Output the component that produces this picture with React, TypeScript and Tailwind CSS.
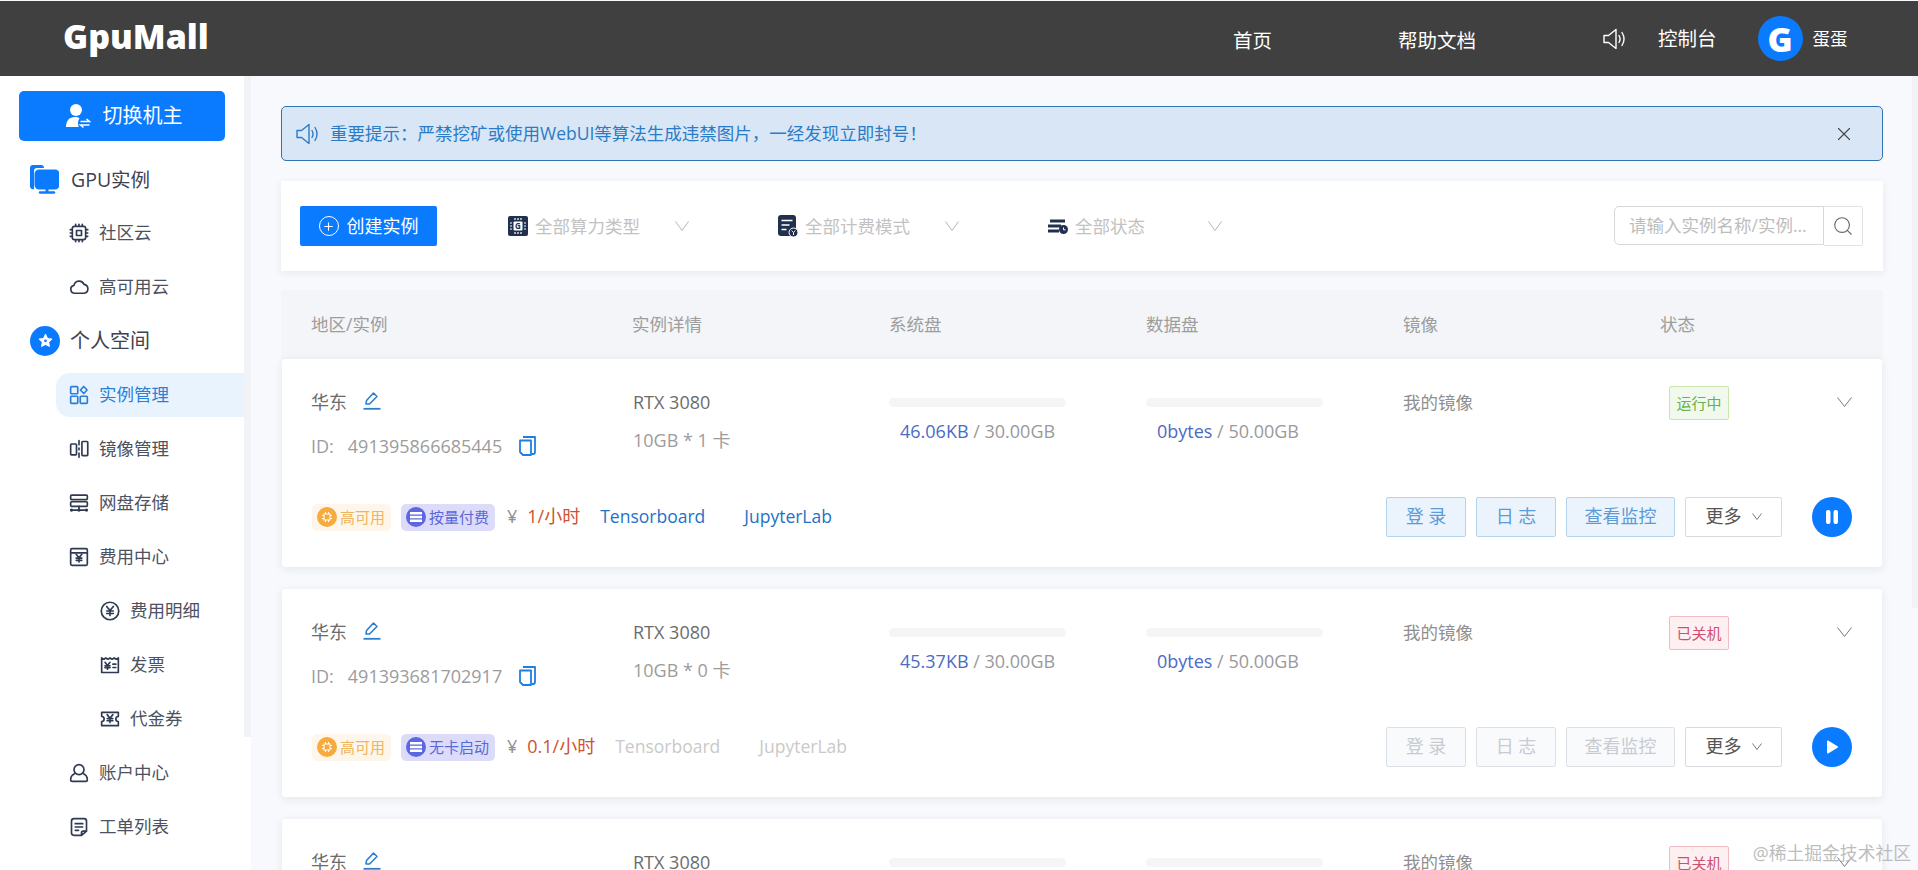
import type { ReactNode } from "react";
import { Search, X, Plus } from "lucide-react";

const ink = "#2f3a52";

function Icon({ size = 20, color = ink, children }: { size?: number; color?: string; children: ReactNode }) {
  return (
    <svg width={size} height={size} viewBox="0 0 24 24" fill="none" stroke={color} strokeWidth={2} strokeLinecap="round" strokeLinejoin="round" className="shrink-0">
      {children}
    </svg>
  );
}

function Vee({ w, h, color, className }: { w: number; h: number; color: string; className?: string }) {
  return (
    <svg width={w} height={h} viewBox={`0 0 ${w} ${h}`} fill="none" stroke={color} strokeWidth={1} className={`shrink-0 ${className ?? ""}`}>
      <path d={`M0.500 0.500L${w / 2} ${h - 0.5}L${w - 0.5} 0.500`} />
    </svg>
  );
}

const Yen = ({ x = 12, y = 12, s = 1 }: { x?: number; y?: number; s?: number }) => (
  <path d={`M${x - 4 * s} ${y - 5 * s}L${x} ${y}L${x + 4 * s} ${y - 5 * s}M${x} ${y}V${y + 6 * s}M${x - 4 * s} ${y + 0.5 * s}H${x + 4 * s}M${x - 4 * s} ${y + 3.5 * s}H${x + 4 * s}`} />
);

const ChipIcon = () => (
  <Icon>
    <rect x="4" y="4" width="16" height="16" rx="2.5" />
    <rect x="9" y="9" width="6" height="6" />
    <path d="M8 1.500v2M12 1.500v2M16 1.500v2M8 20.500v2M12 20.500v2M16 20.500v2M1.500 8h2M1.500 12h2M1.500 16h2M20.500 8h2M20.500 12h2M20.500 16h2" />
  </Icon>
);
const CloudIcon = () => (
  <Icon>
    <path d="M7 19.500a4.800 4.800 0 0 1-1-9.500 6.300 6.300 0 0 1 12-1.200 5.400 5.400 0 0 1 0 10.700z" />
  </Icon>
);
const GridIcon = () => (
  <Icon color="#2b7fd8">
    <rect x="2" y="2" width="8.500" height="8.500" rx="1" />
    <rect x="2" y="13.500" width="8.500" height="8.500" rx="1" />
    <rect x="13.500" y="13.500" width="8.500" height="8.500" rx="1" />
    <path d="M17.700 1.800l4 4.200-4 4.200-4-4.200z" />
  </Icon>
);
const MirrorIcon = () => (
  <Icon>
    <rect x="2" y="6" width="7" height="13" rx="1" />
    <rect x="15.500" y="3" width="7" height="17" rx="1" />
    <path d="M12 2v5M12 11v2M12 17v5" />
  </Icon>
);
const DiskIcon = () => (
  <Icon>
    <rect x="2" y="2.500" width="20" height="5.500" rx="1" />
    <rect x="2" y="10.500" width="20" height="5.500" rx="1" />
    <path d="M12 16v4M4 20.500h16" />
    <circle cx="3" cy="20.500" r="1" />
    <circle cx="12" cy="20.500" r="1" />
    <circle cx="21" cy="20.500" r="1" />
  </Icon>
);
const FeeIcon = () => (
  <Icon>
    <rect x="2" y="2" width="20" height="20" rx="1.500" />
    <path d="M2 7h20" />
    <Yen x={12} y={13} s={0.85} />
  </Icon>
);
const CoinIcon = () => (
  <Icon>
    <circle cx="12" cy="12" r="10.500" />
    <Yen x={12} y={11.5} />
  </Icon>
);
const InvoiceIcon = () => (
  <Icon>
    <path d="M2 3.500l2.500 1.500L7 3.500l2.500 1.500L12 3.500l2.500 1.500L17 3.500l2.500 1.500L22 3.500V21H2z" />
    <Yen x={9} y={12.5} s={0.75} />
    <path d="M15.500 11H19M15.500 15H19" />
  </Icon>
);
const VoucherIcon = () => (
  <Icon>
    <path d="M2 4h20v5a3 3 0 0 0 0 6v5H2v-5a3 3 0 0 0 0-6z" />
    <Yen x={12} y={11} s={0.85} />
  </Icon>
);
const UserIcon = () => (
  <Icon>
    <circle cx="12" cy="8" r="6" />
    <path d="M6.500 13C3.500 14.500 2 17 2 20c0 1 .7 2 2 2h16c1.300 0 2-1 2-2 0-3-1.500-5.500-4.500-7" />
  </Icon>
);
const TicketIcon = () => (
  <Icon>
    <path d="M15 22H6a3 3 0 0 1-3-3V5a3 3 0 0 1 3-3h12a3 3 0 0 1 3 3v12zM15 22v-3a2 2 0 0 1 2-2h4" />
    <path d="M7.500 8h9M7.500 12h9M7.500 16h4" />
  </Icon>
);

const Speaker = ({ color, size = 24 }: { color: string; size?: number }) => (
  <svg width={size} height={size} viewBox="0 0 24 24" fill="none" stroke={color} strokeWidth={1.4} strokeLinejoin="round" strokeLinecap="round" className="shrink-0">
    <path d="M2 8.500h4.500L14 2.500v19l-7.500-6H2z" />
    <path d="M17 8.500c1.200 2 1.200 5 0 7M20 5.500c2.500 4 2.500 9 0 13" />
  </svg>
);

function SideRow({ icon, label, indent = 69, active = false }: { icon: ReactNode; label: string; indent?: number; active?: boolean }) {
  return (
    <div className="h-[54px] flex items-center relative">
      {active && <div className="absolute left-[56px] right-0 top-[5px] h-[44px] bg-[#e9f3fe] rounded-l-[14px]" />}
      <div className={`relative flex items-center gap-[10px] text-[17.5px] ${active ? "text-[#2b7fd8]" : "text-[#4c5260]"}`} style={{ marginLeft: indent }}>
        {icon}
        <span>{label}</span>
      </div>
    </div>
  );
}

function Sidebar() {
  return (
    <aside className="w-[244px] shrink-0 bg-white">
      <button className="ml-[19px] mt-[15px] w-[206px] h-[50px] rounded-[5px] bg-[#0a7bff] text-white text-[20px] flex items-center justify-center gap-[12px] pl-[3px]">
        <svg width="26" height="26" viewBox="0 0 26 26" fill="#fff" className="shrink-0">
          <circle cx="11" cy="7" r="6" />
          <path d="M1 24c0-6 3-10 9-10 2 0 3.500.5 4.500 1.300-1 1.500-1.500 3.500-1.500 5.200 0 1.300.3 2.500.8 3.500z" />
          <path d="M15.500 18.500h9l-3-2.500M24.500 22h-9l3 2.500" stroke="#fff" strokeWidth="1.500" fill="none" />
        </svg>
        切换机主
      </button>
      <div className="mt-[12px]">
        <div className="h-[52.5px] flex items-center gap-[12px] ml-[30px] text-[19.5px] text-[#3c4250]">
          <svg width="29" height="29" viewBox="0 0 29 29" fill="none" className="shrink-0">
            <path d="M3 0h8a3 3 0 0 1 3 3H7a3 3 0 0 0-3 3v18a3 3 0 0 1-4-2V3a3 3 0 0 1 3-3z" fill="#0a7bff" />
            <rect x="6" y="6" width="22" height="17" rx="3" stroke="#0a7bff" strokeWidth="3" fill="#0a7bff" />
            <path d="M10 27.500h14" stroke="#0a7bff" strokeWidth="2.500" strokeLinecap="round" />
            <path d="M17 23v4" stroke="#0a7bff" strokeWidth="3" />
          </svg>
          <span>GPU实例</span>
        </div>
        <SideRow icon={<ChipIcon />} label="社区云" />
        <SideRow icon={<CloudIcon />} label="高可用云" />
        <div className="h-[54px] flex items-center gap-[10px] ml-[30px] text-[20px] text-[#3c4250]">
          <span className="w-[30px] h-[30px] rounded-full bg-[#0a7bff] flex items-center justify-center">
            <svg width="15" height="15" viewBox="0 0 24 24" fill="#fff" stroke="#fff" strokeWidth="2" strokeLinejoin="round">
              <path d="M12 2.500l3 6.300 6.800.9-5 4.700 1.300 6.800-6.100-3.300-6.100 3.300 1.300-6.800-5-4.700 6.800-.9z" />
              <circle cx="12" cy="12.500" r="2.200" fill="#0a7bff" stroke="none" />
            </svg>
          </span>
          <span>个人空间</span>
        </div>
        <SideRow icon={<GridIcon />} label="实例管理" active />
        <SideRow icon={<MirrorIcon />} label="镜像管理" />
        <SideRow icon={<DiskIcon />} label="网盘存储" />
        <SideRow icon={<FeeIcon />} label="费用中心" />
        <SideRow icon={<CoinIcon />} label="费用明细" indent={100} />
        <SideRow icon={<InvoiceIcon />} label="发票" indent={100} />
        <SideRow icon={<VoucherIcon />} label="代金券" indent={100} />
        <SideRow icon={<UserIcon />} label="账户中心" />
        <SideRow icon={<TicketIcon />} label="工单列表" />
      </div>
    </aside>
  );
}

function Toolbar() {
  const selects = [
    { label: "全部算力类型", width: "w-[270px]", chevron: "ml-[28px]", icon: (
      <svg width="20" height="20" viewBox="0 0 20 20" className="shrink-0">
        <rect width="20" height="20" rx="2" fill="#22304f" />
        <rect x="5.500" y="5.500" width="9" height="9" rx="1" fill="#fff" />
        <text x="10" y="13" textAnchor="middle" fontSize="8" fontWeight="700" fill="#22304f">G</text>
        <path d="M7 2v2M10 2v2M13 2v2M7 16v2M10 16v2M13 16v2M2 7h2M2 10h2M2 13h2M16 7h2M16 10h2M16 13h2" stroke="#fff" strokeWidth="1.200" />
      </svg>
    ) },
    { label: "全部计费模式", width: "w-[270px]", chevron: "ml-[28px]", icon: (
      <svg width="20" height="24" viewBox="0 0 20 24" className="shrink-0">
        <rect y="1" width="18" height="21" rx="3" fill="#22304f" />
        <path d="M3.500 6.500h11M3.500 11h8M3.500 15.500h5" stroke="#fff" strokeWidth="1.500" />
        <circle cx="15.500" cy="18.500" r="4.500" fill="#22304f" stroke="#fff" />
        <path d="M13.800 16.500l1.700 2 1.700-2M15.500 18.500v2.500" stroke="#fff" />
      </svg>
    ) },
    { label: "全部状态", width: "w-[174px]", chevron: "ml-auto", icon: (
      <svg width="20" height="16" viewBox="0 0 20 16" className="shrink-0">
        <path d="M2 1.500h15v3H2zM0 6.500h13v3H0zM0 11.500h11v3H0z" fill="#22304f" />
        <circle cx="15.500" cy="11.500" r="4.500" fill="#22304f" />
        <path d="M15.500 9.500v2.300h2" stroke="#fff" fill="none" />
      </svg>
    ) },
  ];
  return (
    <div className="mt-[20px] h-[90px] bg-white shadow-[0_2px_8px_rgba(40,60,90,0.08)] flex items-center pl-[19px] pr-[20px]">
      <button className="w-[137px] h-[40px] bg-[#0a7bff] rounded-[2px] text-white text-[18px] flex items-center justify-center gap-[8px]">
        <span className="w-[20px] h-[20px] rounded-full border-[1.5px] border-white flex items-center justify-center">
          <Plus size={13} strokeWidth={2} />
        </span>
        创建实例
      </button>
      <div className="ml-[71px] flex items-center">
        {selects.map((s) => (
          <div key={s.label} className={`${s.width} flex items-center gap-[7px] text-[17.5px] text-[#c2c2c2]`}>
            {s.icon}
            <span>{s.label}</span>
            <Vee w={14} h={10} color="#b5b5b5" className={s.chevron} />
          </div>
        ))}
      </div>
      <div className="ml-auto flex items-stretch h-[40px]">
        <div className="w-[210px] h-[39px] border border-[#d5d7dc] rounded-l-[5px] pl-[14px] flex items-center text-[17.5px] text-[#bdbdbd] whitespace-nowrap">
          请输入实例名称/实例...
        </div>
        <div className="w-[39px] border border-l-0 border-[#e0e2e6] rounded-r-[2px] flex items-center justify-center">
          <Search size={22} strokeWidth={1.200} color="#666" />
        </div>
      </div>
    </div>
  );
}

const columnGrid = "grid grid-cols-[321px_257px_257px_257px_257px_1fr]";

function Disk({ used, total }: { used: string; total: string }) {
  return (
    <div className="w-[177px]">
      <div className="mt-[9px] h-[9px] rounded-full bg-[#f5f5f6]" />
      <div className="mt-[10px] h-[28px] leading-[28px] pl-[11px] text-[18px] whitespace-nowrap text-[#9a9a9a]">
        <span className="text-[#4c6bc4]">{used}</span> / {total}
      </div>
    </div>
  );
}

function CardTag({ width, bg, color, circle, glyph, label }: { width: string; bg: string; color: string; circle: string; glyph: ReactNode; label: string }) {
  return (
    <div className={`${width} h-[27px] ${bg} rounded-[5px] flex items-center pl-[5px] gap-[3px]`}>
      <span className={`w-[20px] h-[20px] rounded-full ${circle} flex items-center justify-center`}>{glyph}</span>
      <span className={`text-[15px] ${color}`}>{label}</span>
    </div>
  );
}

type Inst = {
  id: string;
  card: string;
  tag: string;
  price: string;
  running: boolean;
  used: string;
};

const instances: Inst[] = [
  { id: "491395866685445", card: "10GB * 1 卡", tag: "按量付费", price: "1/小时", running: true, used: "46.06KB" },
  { id: "491393681702917", card: "10GB * 0 卡", tag: "无卡启动", price: "0.1/小时", running: false, used: "45.37KB" },
  { id: "491393681702917", card: "10GB * 0 卡", tag: "无卡启动", price: "0.1/小时", running: false, used: "45.37KB" },
];

function Card({ d }: { d: Inst }) {
  const actionClass = d.running
    ? "bg-[#ebf4fd] border-[#b4d3ec] text-[#5c9ad8]"
    : "bg-[#f9fafc] border-[#dcdfe6] text-[#c8cbd1]";
  const linkClass = d.running ? "text-[#2272c8]" : "text-[#c9c9c9]";
  return (
    <div className="w-[1600px] h-[208px] shrink-0 rounded-[4px] bg-white shadow-[0_2px_8px_rgba(40,60,90,0.10)]">
      <div className={`h-[138px] pt-[30px] pl-[29px] ${columnGrid}`}>
        <div>
          <div className="-mt-[1px] h-[28px] flex items-center text-[18px] text-[#6c6c6c]">
            华东
            <svg width="18" height="19" viewBox="0 0 18 19" fill="none" stroke="#2b7fd0" strokeWidth="1.600" strokeLinejoin="round" className="ml-[16px] -mt-[4px]">
              <path d="M3 13l.5-3.500L10.500 2l3.500 3.500L6.500 13z" />
              <path d="M0.500 17.800h17" strokeWidth="1.800" />
            </svg>
          </div>
          <div className="mt-[16px] h-[28px] flex items-center text-[18px] text-[#9c9c9c]">
            ID:
            <span className="ml-[14px]">{d.id}</span>
            <svg width="17" height="20" viewBox="0 0 17 20" fill="none" stroke="#1f7fe0" strokeWidth="1.800" strokeLinejoin="round" className="ml-[17px]">
              <path d="M4 1h12v15a2 2 0 0 1-2 2h-1" />
              <path d="M1 4.500h11V19H4l-3-3z" />
            </svg>
          </div>
        </div>
        <div className="pl-[1px]">
          <div className="-mt-[1px] h-[28px] leading-[28px] text-[18px] text-[#6c6c6c]">RTX 3080</div>
          <div className="mt-[10px] h-[28px] leading-[28px] text-[18px] text-[#9c9c9c]">{d.card}</div>
        </div>
        <Disk used={d.used} total="30.00GB" />
        <Disk used="0bytes" total="50.00GB" />
        <div className="-mt-[1px] h-[28px] leading-[28px] text-[17.5px] text-[#8f8f8f]">我的镜像</div>
        <div className="flex items-start justify-between pr-[30px] pl-[9px]">
          <div className={`-mt-[3px] w-[60px] h-[34px] rounded-[2px] border text-[15px] flex items-center justify-center ${d.running ? "bg-[#f0f9eb] border-[#c7e5ad] text-[#6ab04c]" : "bg-[#fef0f0] border-[#f0bcc4] text-[#cf4f70]"}`}>
            {d.running ? "运行中" : "已关机"}
          </div>
          <Vee w={15} h={10} color="#777" className="mt-[8px]" />
        </div>
      </div>
      <div className="h-[40px] pl-[30px] pr-[30px] flex items-center">
        <CardTag width="w-[79px]" bg="bg-[#fff6eb]" color="text-[#f0b45c]" circle="bg-[#f7ab3c]" label="高可用" glyph={
          <svg width="12" height="12" viewBox="0 0 12 12" fill="none" stroke="#fff"><rect x="3" y="3" width="6" height="6" /><path d="M4.500 1v2M7.500 1v2M4.500 9v2M7.500 9v2M1 4.500h2M1 7.500h2M9 4.500h2M9 7.500h2" /></svg>
        } />
        <div className="ml-[10px]">
          <CardTag width="w-[94px]" bg="bg-[#dcdcfa]" color="text-[#5a68d8]" circle="bg-[#5c67e0]" label={d.tag} glyph={
            <svg width="12" height="12" viewBox="0 0 12 12" fill="#fff"><rect y="1" width="12" height="2.500" /><rect y="4.800" width="12" height="2.500" /><rect y="8.500" width="12" height="2.500" /></svg>
          } />
        </div>
        <span className="ml-[12px] pb-[2px] text-[18px] text-[#8f8f8f]">¥</span>
        <span className="ml-[10px] pb-[2px] text-[18px] text-[#cf5230]">{d.price}</span>
        <span className={`ml-[20px] pb-[2px] text-[17.5px] ${linkClass}`}>Tensorboard</span>
        <span className={`ml-[39px] pb-[2px] text-[17.5px] ${linkClass}`}>JupyterLab</span>
        <div className="ml-auto flex items-center">
          <button className={`w-[80px] h-[40px] pb-[2px] rounded-[2px] border text-[18px] ${actionClass}`}>登 录</button>
          <button className={`ml-[10px] w-[80px] h-[40px] pb-[2px] rounded-[2px] border text-[18px] ${actionClass}`}>日 志</button>
          <button className={`ml-[10px] w-[109px] h-[40px] pb-[2px] rounded-[2px] border text-[18px] ${actionClass}`}>查看监控</button>
          <button className="ml-[10px] w-[97px] h-[40px] pb-[2px] rounded-[2px] border border-[#d8dade] bg-white text-[18px] text-[#555] flex items-center justify-center gap-[10px]">
            更多
            <Vee w={10} h={7} color="#777" />
          </button>
          <span className="ml-[30px] w-[40px] h-[40px] rounded-full bg-[#0a7bff] flex items-center justify-center">
            {d.running ? (
              <svg width="16" height="16" viewBox="0 0 16 16" fill="#fff"><rect x="2" y="1" width="4.500" height="14" rx="2" /><rect x="9.500" y="1" width="4.500" height="14" rx="2" /></svg>
            ) : (
              <svg width="16" height="16" viewBox="0 0 16 16" fill="#fff" stroke="#fff" strokeWidth="2" strokeLinejoin="round"><path d="M4 2.500l9 5.500-9 5.500z" /></svg>
            )}
          </span>
        </div>
      </div>
    </div>
  );
}

export default function App() {
  return (
    <div className="w-[1918px] h-[870px] overflow-hidden relative bg-[#f7f9fc] font-['Open_Sans','Noto_Sans_CJK_SC',sans-serif] flex flex-col">
      <header className="mt-[1px] h-[75px] shrink-0 bg-[#404040] text-white flex items-center">
        <span className="ml-[63px] w-[145px] text-[34px] font-extrabold -mt-[4px] whitespace-nowrap">GpuMall</span>
        <span className="ml-[1025px] text-[19.5px] w-[40px] whitespace-nowrap mt-[4px]">首页</span>
        <span className="ml-[125px] text-[19.5px] w-[80px] whitespace-nowrap mt-[4px]">帮助文档</span>
        <span className="ml-[124px]"><Speaker color="#fff" /></span>
        <span className="ml-[32px] text-[19.5px] whitespace-nowrap">控制台</span>
        <span className="ml-[41px] w-[45px] h-[45px] rounded-full bg-[#0a7bff] flex items-center justify-center text-[34px] font-extrabold leading-none">G</span>
        <span className="ml-[10px] text-[17.5px]">蛋蛋</span>
      </header>
      <div className="flex flex-1 min-h-0">
        <Sidebar />
        <div className="w-[7px] shrink-0 bg-white">
          <div className="h-[661px] bg-[#f1f3f6]" />
        </div>
        <main className="w-[1632px] shrink-0 pl-[30px] pt-[30px]">
          <div className="w-[1602px]">
            <div className="h-[55px] rounded-[5px] border border-[#2f74b5] bg-[#d9e6f6] flex items-center pl-[13px] pr-[27px] text-[17.5px] text-[#2a7cc7]">
              <Speaker color="#2a7cc7" />
              <span className="ml-[11px]">重要提示：严禁挖矿或使用WebUI等算法生成违禁图片，一经发现立即封号！</span>
              <X size={22} strokeWidth={1.200} color="#444" className="ml-auto" />
            </div>
            <Toolbar />
            <div className={`mt-[19px] h-[69px] bg-[#f3f5f8] pl-[30px] items-center text-[17.5px] text-[#9d9d9d] ${columnGrid}`}>
              <span>地区/实例</span>
              <span>实例详情</span>
              <span>系统盘</span>
              <span>数据盘</span>
              <span>镜像</span>
              <span>状态</span>
            </div>
            <div className="flex flex-col gap-[22px] pl-[1px]">
              {instances.map((d, i) => (
                <Card key={i} d={d} />
              ))}
            </div>
          </div>
        </main>
      </div>
      <div className="absolute right-0 top-[76px] w-[6px] h-[532px] bg-[#f0f2f5]" />
      <div className="absolute right-[7px] bottom-[3px] text-[17.8px] text-[#bdbdbd]">@稀土掘金技术社区</div>
    </div>
  );
}
